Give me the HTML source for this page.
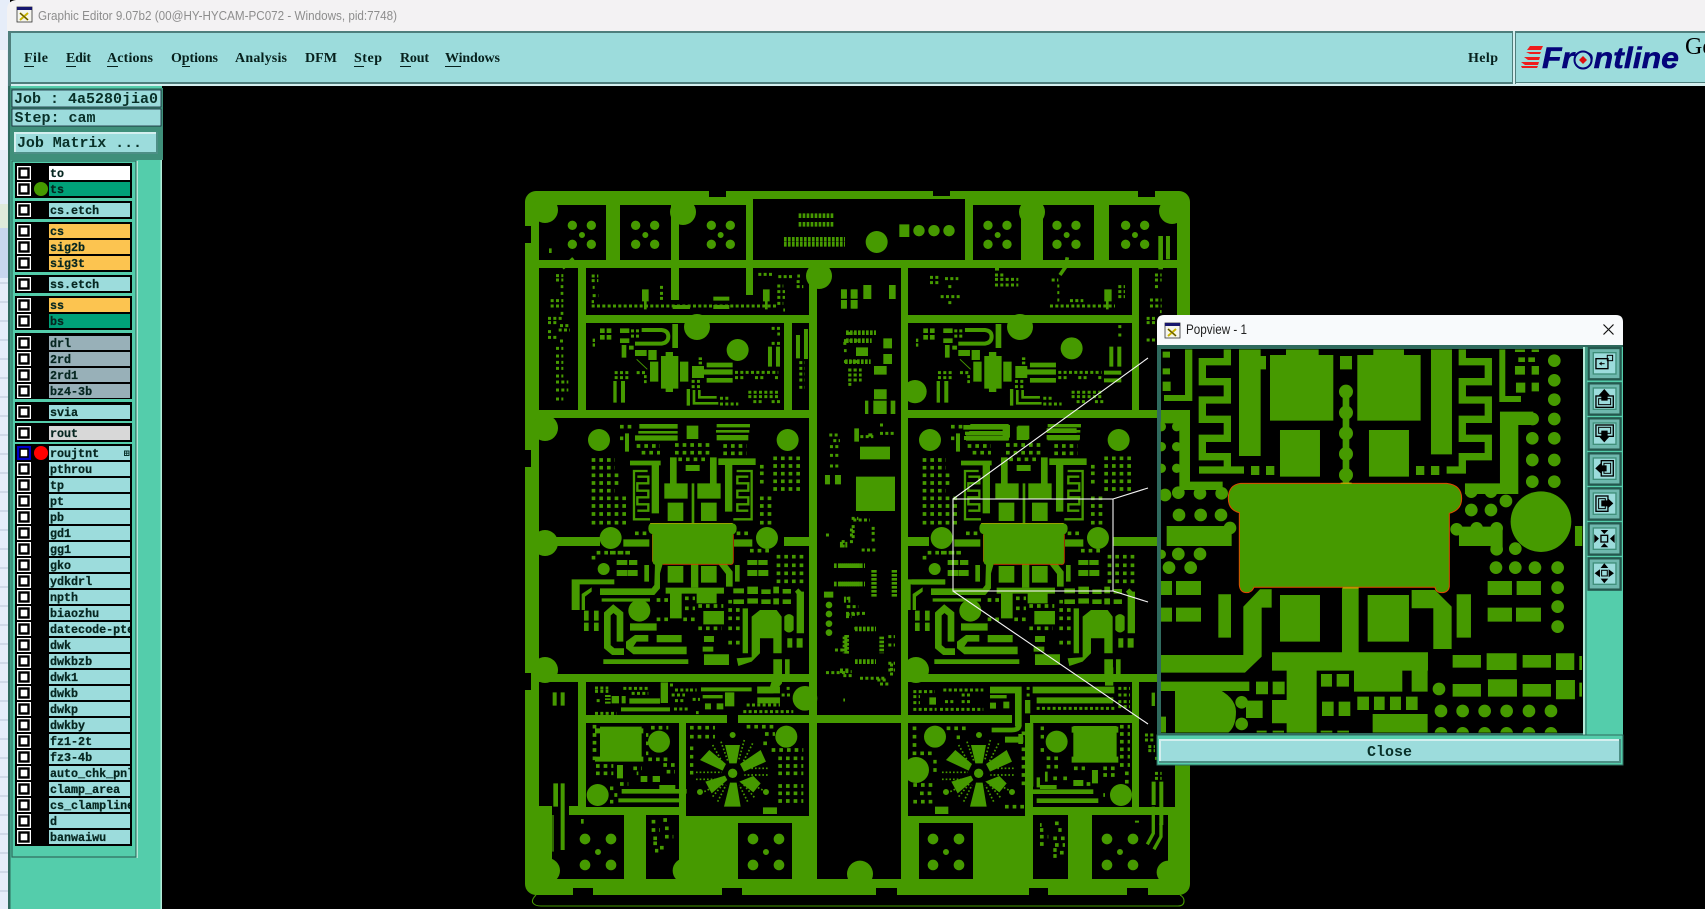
<!DOCTYPE html>
<html><head><meta charset="utf-8"><title>Graphic Editor</title>
<style>
html,body{margin:0;padding:0;background:#000;width:1705px;height:909px;overflow:hidden}
svg{display:block}
.g{fill:#469a00}
.d,.c,.s{fill:none;stroke:#469a00}
.c{stroke-linecap:round}
.d11{stroke-width:11;stroke-dasharray:11 12;fill:none;stroke:#469a00}
.d9{stroke-width:9;stroke-dasharray:9 7;fill:none;stroke:#469a00}
.d14{stroke-width:14;stroke-dasharray:8 4;fill:none;stroke:#469a00}
.m{font-family:"Liberation Serif",serif;font-weight:bold;font-size:14px;fill:#06201c}
.l{font-family:"Liberation Mono",monospace;font-weight:bold;font-size:11.7px;fill:#062620;stroke:#062620;stroke-width:.25}
.j{font-family:"Liberation Mono",monospace;font-weight:bold;font-size:15px;fill:#083028}
.u{stroke:#06201c;stroke-width:1;fill:none}
</style></head><body>
<svg xmlns="http://www.w3.org/2000/svg" width="1705" height="909" viewBox="0 0 1705 909">
<defs>
<clipPath id="lc"><rect x="49" y="160" width="81" height="690"/></clipPath>
<clipPath id="pc"><rect x="32" y="118" width="1266" height="1150"/></clipPath>
<g id="ck"><rect width="14" height="14" fill="#fff"/><rect x="2.5" y="2.5" width="9" height="9" fill="none" stroke="#000" stroke-width="2.4"/></g>
<g id="xi"><rect width="15" height="15" fill="#f5f5ee" stroke="#333" stroke-width=".8"/><rect width="15" height="3" fill="#16166e"/><path d="M3 6l8 7M11 6l-8 7" stroke="#c8b400" stroke-width="2"/><path d="M3 6l8 7" stroke="#222" stroke-width=".8"/></g>

<!-- flower, centred at 0,0 in 3x coords -->
<g id="fl">
<path class="s" stroke-width="5" stroke-dasharray="5 6" d="M-35-95L-15-38M35-100L18-38M60-90L32-35M-60-85L-28-28M105-15H32M105 5H35M-110-3H-32M-110 18H-32M90 50L35 22M-85 55L-32 28M-45 85L-20 35M-60 70L-25 28M45 85L20 35M65 72L28 28"/>
<path class="g" d="M-23-85H22L12-30H-10ZM22-28L84-70L100-35L34-5ZM20 25L62 8L84 30L62 57ZM-8 28H12L24 100H-26ZM-82 25L-23 7L-16 20L-63 60ZM-70-70L-20-28L-30-8L-98-40Z"/>
<path class="c" stroke-width="28" d="M0 0h.01"/>
</g>

<!-- row-2b module, 3x coords -->
<g id="m2">
<path class="g" d="M240 445h14v14h-14zM260 445h14v14h-14zM240 465h14v14h-14zM260 465h14v14h-14zM218 476h7v10h-7zM218 490h7v10h-7zM300 445h28v14h-28zM300 475h28v14h-28zM305 495h14v38h-14zM327 497h14v12h-14zM333 448h9v9h-9zM348 448h9v9h-9zM333 464h9v9h-9zM348 464h9v9h-9zM345 510h35v18h-35zM385 510h25v30h-25zM390 545h25v60h-25zM423 528h52v98h-52zM437 516h22v120h-22zM480 545h25v60h-25zM457 432h17v72h-17zM516 558h36v36h-36zM552 568h86v16h-86zM560 548h78v14h-78zM560 594h78v14h-78zM280 603h10v65h-10zM303 603h12v65h-12zM536 532h10v8h-10zM536 545h10v8h-10zM500 627h10v50h-10z"/>
<path class="s" stroke-width="12" d="M365 450H425Q445 452 445 470T425 491H345"/>
<path class="s" stroke-width="3" d="M350 538L382 568"/>
<path class="s" stroke-width="8" d="M538 630V652H590M522 630V670H595"/>
<path class="d9" d="M284 578H325M284 593H325M645 577H775M645 593H670M705 593H730M765 593H780M515 604H545M515 620H545M600 655H625M600 672H655M685 637H780M685 650H780M700 665H725M755 665H780M350 578H380M372 590H380M372 605H380"/>
</g>

<!-- row-3 module, 3x coords -->
<g id="m3">
<path class="c" stroke-width="66" d="M237 60h.01M803 60h.01M272 354h.01M741 354h.01"/>
<path class="c" stroke-width="36" d="M251 447h.01"/>
<path class="g" d="M358 12h115v14H358zM355 33h118v8H355zM345 46h128v16H345zM315 40h12v55h-12zM590 12h100v10H590zM588 30h100v8H588zM590 45h95v16h-95zM500 17h35v40h-35zM395 125h22v155h-22zM330 122h92v14h-92zM595 115h112v20H595zM615 135h22v140h-22zM433 190h70v46h-70zM450 112h20v80h-20zM532 190h70v46h-70zM570 112h20v80h-20zM497 135h42v18h-42zM443 248h47v55h-47zM543 248h47v55h-47zM515 190h8v120h-8zM310 358h78v22h-78zM642 358h55v22h-55zM443 438h47v50h-47zM543 438h47v50h-47zM513 433h22v70h-22zM373 435h14v50h-14zM645 435h14v50h-14zM290 420h32v15h-32zM327 420h25v15h-25zM290 450h32v18h-32zM323 450h30v18h-30zM682 420h30v15h-30zM715 420h28v15h-28zM682 450h30v18h-30zM715 450h30v18h-30z"/>
<path class="g" d="M405 432H428L420 460V505L403 525H240V505H395L403 495ZM595 432H620L638 455V500H618V462ZM155 478H283V493H179V570H155ZM185 522L215 502V515L195 530V570H185ZM318 665L345 645H385V665H350L340 680H500V703H340L318 685ZM250 718H505V732H250Z"/>
<path class="g" d="M245 535h145v10H245zM330 610h80v22h-80zM410 645h75v22h-75zM437 503h175v18H437zM450 520h35v75h-35zM530 520h60v30h-60zM550 573h62v40h-62zM640 505h32v15h-32zM682 500h32v22h-32zM724 508h28v14h-28zM760 500h17v20h-17zM788 507h25v14h-25zM640 538h32v14h-32zM682 535h32v16h-32zM724 538h28v14h-28zM760 535h17v18h-17zM788 538h25v14h-25zM668 565h16v135h-16zM552 703h75v32h-75zM552 648h30v18h-30zM548 680h32v15h-32zM802 655h15v28h-15zM830 655h18v28h-18zM760 718h26v46h-26zM795 718h14v46h-14zM192 572h14v30h-14zM192 608h14v25h-14zM222 572h14v30h-14zM222 608h14v25h-14z"/>
<path class="g" d="M830 515H852V640H830ZM825 515L835 505L852 522H830Z"/>
<path class="g" d="M695 590L720 570H770L785 590V700H760V655H720V700L695 725L655 738L650 715L695 712Z"/>
<path class="s" stroke-width="7" d="M383 153H342V298H390M352 170H385V190H352V212H385V232H352V253H385V272H352M650 153H695V298H640M685 170H652V190H685V212H652V232H685V253H652V272H685"/>
<path class="s" stroke-width="20" d="M300 665V582L280 566L262 582V680L280 695H312"/>
<path class="c" stroke-width="66" d="M358 572h.01"/>
<path class="g" d="M793 590Q807 575 821 590V630Q807 645 793 630Z"/>
<path class="g" d="M390 310H638Q650 312 650 325T640 343V425Q640 435 630 433H428Q420 435 410 435Q398 435 398 425V343Q385 340 385 325T395 310Z"/>
<path class="s" style="stroke:#c9a800" stroke-width="2" d="M390 310H638M398 343V425"/>
<path class="s" style="stroke:#d03a00" stroke-width="2.5" d="M640 343V425Q640 435 630 433H428"/>
<path class="d11" d="M215 120H285M215 143H285M215 166H300M215 189H300M215 212H285M215 235H325M215 258H325M215 282H325M215 308H325M230 398H330M215 413H230M270 398H330M760 115H850M760 138H850M760 161H850M760 184H850M760 207H850M720 140H740M720 160H740M720 185H740M720 235H760M720 258H760M720 282H760M720 308H760M690 392H750M770 410H850M770 436H850M770 460H850M770 484H850M410 540H450M495 535H525M495 565H525M410 598H455M395 620H410M490 598H525M535 625H605M535 558H610M625 545H660M625 570H660M625 595H660M625 625H660M625 668H660M345 340H380M650 340H690M350 78H420M365 98H420M610 78H680M610 100H680M300 20H340M300 55H310M465 75H580M465 98H580M475 118H565"/>
</g>
</defs>

<!-- desktop sliver -->
<rect width="1705" height="909" fill="#000"/>
<rect x="0" y="0" width="10" height="909" fill="#e6edf9"/>
<path stroke="#b9c5d6" stroke-width="1" d="M0 264H9M0 283H9M0 302H9M0 321H9M0 340H9M0 359H9M0 378H9M0 397H9M0 416H9M0 435H9M0 454H9M0 473H9M0 492H9M0 511H9M0 530H9M0 549H9M0 568H9M0 587H9M0 606H9M0 625H9M0 644H9M0 663H9M0 682H9M0 701H9M0 720H9M0 739H9M0 758H9M0 777H9M0 796H9M0 815H9M0 834H9M0 853H9M0 872H9M0 891H9"/>
<rect x="0" y="204" width="8" height="24" fill="#dfeadb"/><rect x="0" y="228" width="8" height="50" fill="#c8d6ee"/>
<rect x="0" y="50" width="7" height="100" fill="#f2f5fa"/>
<!-- title bar -->
<path d="M7 31V10Q7 1 16 0H1705V31Z" fill="#f3f2f3"/>
<use href="#xi" transform="translate(17,7)"/>
<text x="38" y="20" font-family="'Liberation Sans',sans-serif" font-size="13" fill="#8d8d8d" textLength="359" lengthAdjust="spacingAndGlyphs">Graphic Editor 9.07b2 (00@HY-HYCAM-PC072 - Windows, pid:7748)</text>

<!-- menu -->
<rect x="8" y="31" width="1697" height="55" fill="#4e7e7c"/>
<rect x="11" y="33" width="1501" height="49" fill="#9cdcdc"/>
<rect x="11" y="84" width="1694" height="2" fill="#d4efef"/>
<rect x="1513" y="31" width="2" height="55" fill="#d4efef"/>
<rect x="1516" y="33" width="189" height="49" fill="#9cdcdc"/>
<rect x="1516" y="83" width="189" height="3" fill="#d4efef"/>
<text class="m" x="24" y="62" textLength="24">File</text><path class="u" d="M24 66.5H34"/>
<text class="m" x="66" y="62" textLength="25">Edit</text><path class="u" d="M66 66.5H76"/>
<text class="m" x="107" y="62" textLength="46">Actions</text><path class="u" d="M107 66.5H118"/>
<text class="m" x="171" y="62" textLength="47">Options</text><path class="u" d="M182 66.5H190"/>
<text class="m" x="235" y="62" textLength="52">Analysis</text>
<text class="m" x="305" y="62" textLength="32">DFM</text>
<text class="m" x="354" y="62" textLength="28">Step</text><path class="u" d="M354 66.5H364"/>
<text class="m" x="400" y="62" textLength="29">Rout</text><path class="u" d="M400 66.5H411"/>
<text class="m" x="445" y="62" textLength="55">Windows</text><path class="u" d="M445 66.5H461"/>
<text class="m" x="1468" y="62" textLength="30">Help</text>
<!-- logo -->
<path fill="#ee1c1c" d="M1530 46H1543L1541 50H1527ZM1526 52H1541L1540 54H1530ZM1524 57H1540L1539 60H1528ZM1521 62H1539L1538 65H1525ZM1521 66H1538L1537 68H1522Z"/>
<text x="1542" y="68" font-family="'Liberation Sans',sans-serif" font-weight="bold" font-style="italic" font-size="30" fill="#04047a" stroke="#04047a" stroke-width=".5" textLength="137" lengthAdjust="spacingAndGlyphs">Frontline</text>
<circle cx="1583" cy="60" r="8.5" fill="#9cdcdc" stroke="#04047a" stroke-width="2"/>
<path d="M1583 56l4 4-4 4-4-4z" fill="#e01010"/>
<text x="1685" y="54" font-family="'Liberation Serif',serif" font-size="24" fill="#000">Ge</text>

<!-- left panel -->
<rect x="8" y="86" width="154" height="823" fill="#54cdab"/>
<rect x="8" y="86" width="2.5" height="823" fill="#2f6a5e"/>
<rect x="160.5" y="160" width="1.5" height="749" fill="#b4ead8"/>
<rect x="10" y="88" width="153" height="72" fill="#3f8f7a"/>
<rect x="12" y="90" width="149" height="17" fill="#9cdcdc" stroke="#123" stroke-width=".8"/>
<rect x="12" y="109" width="149" height="17" fill="#9cdcdc" stroke="#123" stroke-width=".8"/>
<rect x="12" y="129" width="149" height="28" fill="#3f8f7a"/>
<rect x="14" y="132" width="144" height="22" fill="#4e8f86"/>
<rect x="14" y="132" width="142" height="20" fill="#d4efef"/>
<rect x="16" y="134" width="140" height="18" fill="#9cdcdc"/>
<text class="j" x="14" y="103" textLength="144">Job : 4a5280jia0</text>
<text class="j" x="14.5" y="122">Step: cam</text>
<text class="j" x="17" y="147" textLength="125">Job Matrix ...</text>

<!-- layer list frame -->
<rect x="12" y="161" width="124" height="696" fill="#54cdab" stroke="#2f6a5e" stroke-width="1.2"/>
<rect x="136.5" y="161" width="1.5" height="697" fill="#b4ead8"/>
<g fill="#000">
<rect x="15" y="163" width="117" height="35"/><rect x="15" y="201" width="117" height="18"/><rect x="15" y="222" width="117" height="50"/><rect x="15" y="275" width="117" height="18"/><rect x="15" y="296" width="117" height="34"/><rect x="15" y="333" width="117" height="66"/><rect x="15" y="402" width="117" height="19"/><rect x="15" y="423" width="117" height="19"/><rect x="15" y="444" width="117" height="402"/>
</g>
<g>
<rect x="49" y="166" width="81" height="14" fill="#fff"/>
<rect x="49" y="182" width="81" height="14" fill="#00a078"/>
<rect x="49" y="203" width="81" height="14" fill="#9cdcdc"/>
<rect x="49" y="224" width="81" height="14" fill="#fcc450"/>
<rect x="49" y="240" width="81" height="14" fill="#fcc450"/>
<rect x="49" y="256" width="81" height="14" fill="#fcc450"/>
<rect x="49" y="277" width="81" height="14" fill="#9cdcdc"/>
<rect x="49" y="298" width="81" height="14" fill="#fcc450"/>
<rect x="49" y="314" width="81" height="14" fill="#00a078"/>
<rect x="49" y="336" width="81" height="14" fill="#98b0b8"/>
<rect x="49" y="352" width="81" height="14" fill="#98b0b8"/>
<rect x="49" y="368" width="81" height="14" fill="#98b0b8"/>
<rect x="49" y="384" width="81" height="14" fill="#98b0b8"/>
<rect x="49" y="405" width="81" height="14" fill="#9cdcdc"/>
<rect x="49" y="426" width="81" height="14" fill="#d8d8d8"/>
<rect x="49" y="446" width="81" height="398" fill="#9cdcdc"/>
<path stroke="#000" stroke-width="2" d="M49 461H130M49 477H130M49 493H130M49 509H130M49 525H130M49 541H130M49 557H130M49 573H130M49 589H130M49 605H130M49 621H130M49 637H130M49 653H130M49 669H130M49 685H130M49 701H130M49 717H130M49 733H130M49 749H130M49 765H130M49 781H130M49 797H130M49 813H130M49 829H130"/>
</g>
<g>
<use href="#ck" x="17" y="166"/><use href="#ck" x="17" y="182"/><use href="#ck" x="17" y="203"/><use href="#ck" x="17" y="224"/><use href="#ck" x="17" y="240"/><use href="#ck" x="17" y="256"/><use href="#ck" x="17" y="277"/><use href="#ck" x="17" y="298"/><use href="#ck" x="17" y="314"/><use href="#ck" x="17" y="336"/><use href="#ck" x="17" y="352"/><use href="#ck" x="17" y="368"/><use href="#ck" x="17" y="384"/><use href="#ck" x="17" y="405"/><use href="#ck" x="17" y="426"/>
<rect x="17" y="446" width="14" height="14" fill="#0000c8"/><rect x="20" y="449" width="8" height="8" fill="#fff" stroke="#000" stroke-width="1.6"/>
<use href="#ck" x="17" y="462"/><use href="#ck" x="17" y="478"/><use href="#ck" x="17" y="494"/><use href="#ck" x="17" y="510"/><use href="#ck" x="17" y="526"/><use href="#ck" x="17" y="542"/><use href="#ck" x="17" y="558"/><use href="#ck" x="17" y="574"/><use href="#ck" x="17" y="590"/><use href="#ck" x="17" y="606"/><use href="#ck" x="17" y="622"/><use href="#ck" x="17" y="638"/><use href="#ck" x="17" y="654"/><use href="#ck" x="17" y="670"/><use href="#ck" x="17" y="686"/><use href="#ck" x="17" y="702"/><use href="#ck" x="17" y="718"/><use href="#ck" x="17" y="734"/><use href="#ck" x="17" y="750"/><use href="#ck" x="17" y="766"/><use href="#ck" x="17" y="782"/><use href="#ck" x="17" y="798"/><use href="#ck" x="17" y="814"/><use href="#ck" x="17" y="830"/>
</g>
<circle cx="41" cy="189" r="7" fill="#469a00"/><circle cx="41" cy="453" r="7" fill="#ff0000"/>
<g clip-path="url(#lc)">
<text class="l" x="50" y="177">to</text><text class="l" x="50" y="193">ts</text><text class="l" x="50" y="214">cs.etch</text><text class="l" x="50" y="235">cs</text><text class="l" x="50" y="251">sig2b</text><text class="l" x="50" y="267">sig3t</text><text class="l" x="50" y="288">ss.etch</text><text class="l" x="50" y="309">ss</text><text class="l" x="50" y="325">bs</text><text class="l" x="50" y="347">drl</text><text class="l" x="50" y="363">2rd</text><text class="l" x="50" y="379">2rd1</text><text class="l" x="50" y="395">bz4-3b</text><text class="l" x="50" y="416">svia</text><text class="l" x="50" y="437">rout</text>
<text class="l" x="50" y="457">roujtnt</text><text class="l" x="50" y="473">pthrou</text><text class="l" x="50" y="489">tp</text><text class="l" x="50" y="505">pt</text><text class="l" x="50" y="521">pb</text><text class="l" x="50" y="537">gd1</text><text class="l" x="50" y="553">gg1</text><text class="l" x="50" y="569">gko</text><text class="l" x="50" y="585">ydkdrl</text><text class="l" x="50" y="601">npth</text><text class="l" x="50" y="617">biaozhu</text><text class="l" x="50" y="633">datecode-pte</text><text class="l" x="50" y="649">dwk</text><text class="l" x="50" y="665">dwkbzb</text><text class="l" x="50" y="681">dwk1</text><text class="l" x="50" y="697">dwkb</text><text class="l" x="50" y="713">dwkp</text><text class="l" x="50" y="729">dwkby</text><text class="l" x="50" y="745">fz1-2t</text><text class="l" x="50" y="761">fz3-4b</text><text class="l" x="50" y="777">auto_chk_pnl</text><text class="l" x="50" y="793">clamp_area</text><text class="l" x="50" y="809">cs_clampline</text><text class="l" x="50" y="825">d</text><text class="l" x="50" y="841">banwaiwu</text>
</g>
<rect x="124.5" y="451" width="4.5" height="4.5" fill="none" stroke="#083028" stroke-width="1"/><path d="M126.7 451v4.5M124.5 453.2h4.5" stroke="#083028" stroke-width=".8"/>

<!-- BOARD -->
<rect x="525" y="191" width="665" height="704" rx="11" fill="#469a00"/>
<path fill="#000" d="M539 205h67v55h-67zM620 205h51v55h-51zM679 205h67v55h-67zM753 199h212v61H753zM973 205h48v55h-48zM1043 205h51v55h-51zM1109 205h68v55h-68zM539 268h39v142h-39zM586 268h223v47H586zM586 323h198v87H586zM792 323h17v87h-17zM817 268h84v447h-84zM817 723h84v156h-84zM908 268h224v47H908zM908 323h224v87H908zM1139 268h38v142h-38zM539 418h270v256H539zM908 418h269v256H908zM539 682h39v124h-39zM586 682h223v33H586zM727 715h11v8h-11zM586 723h93v84h-93zM686 723h123v93H686zM908 682h224v33H908zM1012 715h18v8h-18zM908 723h117v93H908zM1033 723h99v84h-99zM1139 682h36v125h-36zM552 806h17v9h-17zM552 815h72v64h-72zM646 815h33v64h-33zM738 823h54v56h-54zM919 823h54v56h-54zM1033 815h35v64h-35zM1092 815h76v64h-76zM573 888h20v7h-20zM722 888h20v7h-20zM876 888h21v7h-21zM1029 888h19v7h-19zM1127 888h21v7h-21zM525 226h6v17h-6zM525 450h6v17h-6zM525 673h6v17h-6zM709 191h17v6h-17zM933 191h17v5h-17zM1138 191h17v6h-17z"/>
<path fill="none" stroke="#469a00" stroke-width="1.1" d="M536 895Q531 900 533 903Q535 906 541 906H1178Q1184 906 1184 901Q1184 897 1180 895"/>

<!-- stubs / big features in absolute coords -->
<path class="g" d="M671 268h8v32h-8zM746 268h7v27h-7zM539 537h61v9h-61zM784 537h25v9h-25zM908 537h21v9h-21zM1113 537h44v9h-44z"/>
<path class="c" stroke-width="26" d="M545 210h.01M545 428h.01M545 543h.01M545 670h.01M819 276h.01M697 327h.01M683 212h.01M1020 327h.01M1032 212h.01"/>
<path class="c" stroke-width="26" d="M1172 211h.01"/>
<use href="#m2" transform="translate(520,180) scale(.3333)"/>
<use href="#m2" transform="translate(843.3,180) scale(.3333)"/>
<use href="#m3" transform="translate(520,420) scale(.3333)"/>
<use href="#m3" transform="translate(851,420) scale(.3333)"/>

<!-- zoom 6 top-left -->
<g transform="translate(520,180) scale(.3333)">
<path class="c" stroke-width="28" d="M157 136h.01M214 136h.01M157 193h.01M214 193h.01M347 136h.01M404 136h.01M347 193h.01M404 193h.01M574 136h.01M631 136h.01M574 193h.01M631 193h.01"/>
<path class="c" stroke-width="18" d="M186 165h.01M376 165h.01M602 165h.01"/>
<path class="c" stroke-width="66" d="M653 510h.01"/>
<path class="g" d="M87 205h8v14h-8zM366 328h20v36h-20zM372 364h8v24h-8zM729 328h20v36h-20zM735 364h8v24h-8zM458 375h52v12h-52zM580 350h48v12h-48zM580 375h48v12h-48zM744 500h12v60h-12zM768 500h12v60h-12zM828 465h12v70h-12zM852 447h12v90h-12zM963 328h18v28h-18zM995 328h18v28h-18zM963 360h18v26h-18zM995 360h18v26h-18z"/>
<path class="s" stroke-width="10" d="M128 265L160 235"/>
<path class="d14" d="M836 107H940M836 133H940M792 178H975M792 193H975"/>
<path class="d9" d="M108 287H130M108 300H130M122 320H130M122 340H130M92 362H130M92 378H130M122 400H130M84 415H130M84 428H110M120 437H150M84 455H100M116 450H150M84 472H115M120 483H130M108 505H130M108 528H130M108 547H130M108 565H130M108 588H130M108 606H145M108 630H145M108 657H130M215 288H235M215 302H235M218 322H224M218 347H235M215 365H222M215 378H770M420 322H435M420 340H435M420 355H435M715 283H760M775 290H820M832 288H840M830 305H845M830 320H850M772 318H790M772 335H795M772 352H795M772 370H790M790 390H795M772 410H782M755 445H780M772 462H780M755 490H780M838 548H855M838 565H855M838 582H855M838 600H855M838 622H855M985 460H1020M972 482H1020M972 512H980M972 545H1020M985 570H1020M985 585H1020M985 600H1020"/>
</g>
<!-- zoom 10 top-right -->
<g transform="translate(840,180) scale(.3333)">
<path class="c" stroke-width="28" d="M444 136h.01M501 136h.01M444 193h.01M501 193h.01M651 136h.01M708 136h.01M651 193h.01M708 193h.01M857 136h.01M914 136h.01M857 193h.01M914 193h.01"/>
<path class="c" stroke-width="18" d="M473 165h.01M680 165h.01M885 165h.01"/>
<path class="c" stroke-width="66" d="M110 186h.01M695 505h.01"/>
<path class="c" stroke-width="34" d="M237 152h.01M282 152h.01M327 152h.01"/>
<path class="c" stroke-width="70" d="M225 635h.01"/>
<path class="g" d="M178 133h30v38h-30zM3 328h16v28H3zM32 328h18v28H32zM70 315h24v42H70zM147 315h20v42h-20zM3 360h16v26H3zM32 360h18v26H32zM465 240h12v32h-12zM955 168h14v100h-14zM978 168h12v70h-12zM130 475h26v30h-26zM130 522h26v30h-26zM102 558h38v26h-38zM102 628h38v30h-38zM48 502h36v26H48zM808 500h12v60h-12zM832 500h12v60h-12zM792 572h52v12h-52zM792 595h52v12h-52zM793 328h22v36h-22zM798 364h8v24h-8zM100 662h40v40h-40zM75 662h10v40H75zM152 662h14v40h-14zM488 745h22v28h-22zM530 740h35v40h-35zM370 735h140v14H370zM375 755h135v10H375zM372 768h135v12H372zM620 745h90v14h-90zM620 765h100v14H620z"/>
<path class="s" stroke-width="11" d="M682 232L676 262L660 285"/>
<path class="d14" d="M18 458H108M18 482H95M15 545H92"/>
<path class="d9" d="M465 285H495M465 298H535M465 315H535M635 300H655M652 318H658M652 338H658M652 360H658M630 378H825M690 362H730M835 320H855M835 335H855M835 350H855M945 285H965M945 300H965M945 320H960M930 360H965M930 378H965M960 395H965M270 292H300M270 308H300M315 296H355M325 320H335M302 350H360M325 368H335M920 415H945M920 428H945M920 480H945M830 410H860M835 440H845M835 465H845M25 570H65M25 585H65M25 600H65M25 613H35M72 515H80M10 490H20"/>
</g>

<!-- center column zoom 7 / 11 -->
<g transform="translate(520,420) scale(.3333)">
<path class="c" stroke-width="20" d="M927 555h.01M927 582h.01M927 611h.01M927 638h.01"/>
<path class="g" d="M915 165h15v28h-15zM945 165h18v28h-18zM912 515h28v18h-28zM972 530h6v18h-6zM985 530h6v18h-6zM1008 172h12v100h-12zM1003 25h14v40h-14z"/>
<path class="d14" d="M942 437H1020M942 492H1020M980 645V705"/>
<path class="d9" d="M928 45H960M940 62H960M930 80H960M930 106H960M930 138H955M995 295H1015M990 330H1005M990 345H1005M990 365H1005M918 345H928M960 370H982M960 378H982M918 758H980M945 690H970M982 560H1015M980 583H1015M1003 625H1015"/>
</g>
<g transform="translate(840,420) scale(.3333)">
<path class="g" d="M48 170h117v103H48zM60 80h90v38H60zM85 40h12v10H85zM215 478h100v16H215z"/>
<path class="d14" d="M0 437H75M0 492H75M15 650V700M125 650V700M45 627H108M45 725H108"/>
<path class="d14" style="stroke-width:16" d="M102 450V530M163 450V530"/>
<path class="d9" d="M45 30H60M45 50H100M120 15H135M120 40H165M40 300H90M35 320H45M35 335H45M35 350H45M95 325H110M95 340H110M95 360H110M5 365H20M5 378H20M65 390H110M20 535H30M20 560H35M18 580H82M18 590H35M145 650H165M145 675H165M0 750H30M145 730H165M145 750H165M60 775H140"/>
</g>

<!-- bottom-left rows -->
<g transform="translate(520,660) scale(.3333)">
<use href="#fl" x="638" y="340"/>
<path class="c" stroke-width="66" d="M417 245h.01M799 230h.01M233 405h.01"/>
<path class="c" stroke-width="74" d="M855 115h.01"/>
<path class="c" stroke-width="32" d="M195 537h.01M273 537h.01M195 615h.01M273 615h.01M699 537h.01M777 537h.01M699 615h.01M777 615h.01"/>
<path class="c" stroke-width="18" d="M234 576h.01M738 576h.01M540 396h.01M738 396h.01M638 225h.01"/>
<path class="c" stroke-width="76" d="M82 632h.01M496 632h.01M1020 640h.01"/>
<path class="g" d="M98 97h12v40H98zM122 97h12v40h-12zM100 370h14v70h-14zM122 370h12v200h-12zM97 465h4v110h-4zM240 200h125v105H240zM225 205h145v15H225zM225 290h145v15H225zM291 315h18v40h-18zM305 387h195v14H305zM418 375h48v12h-48zM295 415h190v12H295zM422 67h22v62h-22zM303 142h147v12H303zM328 115h92v16h-92zM275 108h22v22h-22zM543 82h152v12H543zM548 105h60v10h-60zM615 97h28v42h-28zM762 0h24v65h-24zM712 80h68v20h-68zM712 112h68v18h-68zM729 442h42v20h-42zM555 130h18v18h-18zM590 130h20v18h-20zM362 348h20v18h-20zM398 348h22v18h-22zM255 105h17v6h-17zM255 115h17v5h-17zM255 125h17v6h-17zM305 108h12v22h-12z"/>
<path class="g" d="M762 40H786V70L760 100H712V80H750Z"/>
<path class="d9" d="M225 84H265M225 94H265M310 85H385M335 100H385M230 122H245M510 90H530M465 90H505M455 105H495M465 122H495M518 118H540M462 147H510M528 158H536M670 155H820M680 135H780M785 105H810M450 75H460M225 160H290M800 85H810"/>
<path class="d11" d="M218 200H230M218 225H230M218 248H230M218 270H230M218 295H230M378 225H385M378 250H385M378 280H385M393 203H445M385 298H445M430 315H465M440 335H465M228 318H280M228 340H280M340 325H365M350 340H355M300 372H325M510 203H585M510 230H585M510 265H520M510 290H520M510 315H520M510 338H520M680 200H765M735 222H765M730 250H745M755 270H850M775 295H850M775 318H850M775 340H850M775 378H850M775 400H850M775 423H850M395 485H410M430 480H450M395 510H420M435 505H450M400 535H415M435 530H460M400 550H415M405 572H415M420 563H440M270 385H280M283 405H292M270 425H280"/>
<path class="g" d="M183 477h8v14h-8z"/>
</g>
<!-- bottom-right rows -->
<g transform="translate(840,660) scale(.3333)">
<use href="#fl" x="416" y="340"/>
<path class="c" stroke-width="66" d="M285 230h.01M650 245h.01M843 405h.01"/>
<path class="c" stroke-width="78" d="M228 330h.01"/>
<path class="c" stroke-width="78" d="M228 30h.01M60 642h.01"/>
<path class="c" stroke-width="70" d="M985 637h.01"/>
<path class="c" stroke-width="32" d="M279 537h.01M357 537h.01M279 615h.01M357 615h.01M801 537h.01M879 537h.01M801 615h.01M879 615h.01"/>
<path class="c" stroke-width="18" d="M318 576h.01M840 576h.01M318 396h.01M516 396h.01M417 225h.01"/>
<path class="g" d="M700 198h130v110H700zM695 200h140v18H695zM695 290h140v18H695zM555 190h25v190h-25zM555 388h205v14H555zM590 415h185v14H590zM600 375h50v12h-50zM590 352h10v30h-10zM450 80h95v20h-95zM450 105h50v10h-50zM525 85h20v115h-20zM285 440h40v22h-40zM495 230h55v18h-55zM535 222h14v30h-14zM555 120h16v40h-16zM578 80h245v20H578zM590 112h230v18H590zM795 22h25v55h-25zM756 330h18v40h-18zM615 335h8v30h-8zM700 360h30v18h-30zM450 128h18v18h-18zM490 125h18v20h-18zM268 112h20v22h-20zM935 98h10v40h-10zM965 170h12v30h-12zM935 365h12v70h-12zM958 365h12v130h-12zM885 482h12v6h-12z"/>
<path class="s" stroke-width="14" d="M538 195Q538 210 515 210H455"/>
<path class="s" stroke-width="10" d="M940 440V520L922 553M963 490V530L942 568"/>
<path class="d9" d="M0 35H35M10 47H35M112 60H140M120 72H150M150 15H165M150 28H165M150 42H165M10 120H15M220 95H285M220 110H240M220 128H240M220 148H290M310 90H430M365 105H395M315 125H340M365 125H395M300 148H430M590 145H825M560 85H575M560 105H575M835 85H870M835 105H870M835 125H870M835 140H870M915 225H945M915 240H945M925 260H945M925 272H945M945 340H965M945 355H965M945 295H950"/>
<path class="d11" d="M218 205H235M218 230H230M218 255H230M218 280H285M218 300H228M320 205H385M350 232H360M545 220H555M545 268H555M545 295H555M545 320H555M545 345H555M545 370H555M220 375H285M240 400H280M220 425H280M280 305H290M280 330H290M495 440H555M602 205H612M602 230H612M602 270H612M620 295H660M620 320H660M640 355H660M670 355H690M702 325H735M740 372H755M790 325H830M790 345H830M840 200H870M840 222H870M840 245H870M840 268H870M840 290H870M840 315H870M855 340H870M855 365H870M790 405H795M645 490H665M655 510H665M640 535H675M645 555H675M640 570H650M660 578H675M640 588H650M600 495H605M600 510H610M600 530H625M600 552H618"/>
</g>

<!-- selection rectangle & rays -->
<g fill="none" stroke="#f4f4f4" stroke-width="1.1">
<rect x="953" y="499" width="160" height="92"/>
<path d="M953 499L1148 358M1113 499L1148 488M1113 591L1148 602M953 591L1148 724"/>
</g>

<!-- POPUP -->
<path d="M1157 322Q1157 315 1164 315H1616Q1623 315 1623 322V345H1157Z" fill="#f8fafc"/>
<rect x="1157" y="345" width="466" height="420" fill="#54cdab"/>
<rect x="1157" y="345" width="466" height="2" fill="#2f6a5e"/>
<rect x="1157" y="345" width="3" height="420" fill="#2f6a5e"/>
<rect x="1160" y="347" width="424" height="388" fill="#2f6a5e"/>
<rect x="1583" y="347" width="2" height="390" fill="#b4ead8"/>
<rect x="1585" y="347" width="2" height="390" fill="#2f6a5e" opacity=".5"/>
<rect x="1161" y="349" width="422" height="384" fill="#000"/>
<use href="#xi" transform="translate(1165,323)"/>
<text x="1186" y="334" font-family="'Liberation Sans',sans-serif" font-size="13.5" fill="#222" textLength="61" lengthAdjust="spacingAndGlyphs">Popview - 1</text>
<path d="M1603.5 324.5l10 10M1613.5 324.5l-10 10" stroke="#111" stroke-width="1.2" fill="none"/>

<g transform="translate(1150,310) scale(.3333)"><g clip-path="url(#pc)">
<path class="g" d="M38 125h22v18H38zM38 175h22v18H38zM38 215h24v28H38zM105 118h22v155h-22zM42 255h85v18H42zM267 118h65v320h-65zM843 118h63v315h-63zM312 138h36v40h-36zM362 138h36v40h-36zM570 138h36v40h-36zM622 138h36v40h-36zM360 135h190v197H360zM408 118h98v18h-98zM622 135h190v197H622zM670 118h92v18h-92zM578 245h20v280h-20zM390 360h120v140H390zM657 360h120v140H657zM303 468h25v27h-25zM348 468h25v27h-25zM798 468h25v27h-25zM843 468h25v27h-25zM1095 118h30v8h-30zM1145 118h22v8h-22zM1105 142h20v14h-20zM1135 142h20v14h-20zM1095 168h30v26h-30zM1145 168h22v26h-22zM1098 218h28v30h-28zM1145 218h22v26h-22zM1048 118h18v155h-18zM1048 258h65v18h-65z"/>
<path class="s" stroke-width="22" stroke-linejoin="miter" d="M232 118V155H157V215H232V270H157V328H232V385H157V440H232V480H147H282"/>
<path class="s" stroke-width="22" d="M937 118V155H1015V215H937V270H1015V328H937V385H1015V440H937V480H890"/>
<path class="g" d="M33 300H120V515H218V540H88V340H33ZM1050 305H1150V345H1105V552H945V520H1050ZM50 648H245V708H50ZM927 650H1058V708H927ZM1022 690H1058V725H1022Z"/>
<path class="c" stroke-width="42" d="M588 245h.01M588 308h.01M588 370h.01M588 432h.01M588 495h.01"/>
<path class="c" stroke-width="38" d="M1147 385h.01M1147 450h.01M1147 515h.01M1213 152h.01M1213 211h.01M1213 269h.01M1213 327h.01M1213 385h.01M1213 450h.01M1213 515h.01M1148 327h.01M964 545h.01M1023 545h.01M964 600h.01M1023 600h.01M1068 573h.01M1040 718h.01M87 615h.01M152 615h.01M213 615h.01M240 654h.01M85 732h.01M150 732h.01M57 773h.01M122 773h.01M85 548h.01M150 550h.01M215 550h.01M45 555h.01M920 658h.01M980 655h.01M1040 655h.01M1096 716h.01M1038 773h.01M1096 773h.01M1155 773h.01M1223 773h.01M1223 833h.01M1223 890h.01M1223 950h.01M867 1137h.01M873 1203h.01M938 1203h.01M1004 1203h.01M1070 1203h.01M1137 1203h.01M1203 1203h.01M873 1270h.01M938 1270h.01M1004 1270h.01M1070 1270h.01M1137 1270h.01M1203 1270h.01M275 1177h.01M275 1242h.01"/>
<path class="c" stroke-width="28" d="M80 350h.01M80 410h.01M80 475h.01M34 350h.01M34 410h.01M34 475h.01M34 733h.01"/>
<path class="c" stroke-width="182" d="M1173 635h.01"/>
<path class="g" d="M1275 648h22v60h-22zM1013 813h73v42h-73zM1100 813h73v42h-73zM1013 893h73v42h-73zM1098 893h75v42h-75zM33 813h33v42H33zM78 813h75v42H78zM33 893h33v42H33zM78 893h75v42H78zM205 853h38v130h-38zM920 853h43v130h-43zM390 855h120v140H390zM653 855h124v140H653zM576 835h50v195h-50zM366 1027h468v55H366zM410 1082h90v188h-90zM366 1170h45v70h-45zM612 1082h145v63H612zM785 1082h48v63h-48zM513 1092h33v38h-33zM560 1092h37v38h-37zM516 1175h35v43h-35zM566 1175h35v43h-35zM622 1160h35v40h-35zM672 1160h32v40h-32zM720 1160h33v40h-33zM768 1160h35v40h-35zM668 1212h165v56H668zM908 1035h85v38h-85zM1010 1030h90v50h-90zM1118 1035h85v38h-85zM1218 1030h55v50h-55zM1288 1038h8v42h-8zM908 1122h85v38h-85zM1014 1108h87v52h-87zM1118 1122h85v38h-85zM1218 1110h57v58h-57zM1288 1118h8v42h-8zM33 1115h265v28H33zM318 1115h36v38h-36zM368 1115h36v38h-36zM288 1172h50v52h-50zM33 1220h15v48H33zM320 1262h30v6h-30zM368 1262h34v6h-34zM512 1262h35v6h-35zM562 1262h35v6h-35z"/>
<path class="g" d="M330 838H365V893H335V1040L285 1088H33V1035H280V890ZM785 840H855L905 890V1017H850V895H785ZM75 1268V1130H190Q258 1160 258 1205Q258 1250 235 1268Z"/>
<path class="g" d="M272 520H890Q935 525 935 565Q935 600 898 610V830Q895 848 875 848Q858 848 855 832H312Q305 848 290 848Q270 848 268 825V608Q235 600 235 565Q235 525 272 520Z" stroke="#e04a00" stroke-width="3"/>
<path class="s" style="stroke:#bfa000" stroke-width="4" d="M572 520H605M578 834H626"/>
</g></g>

<!-- popup side buttons -->
<g transform="translate(1150,310) scale(.3333)">
<g fill="#6fb8ae" stroke="#24584e" stroke-width="7">
<rect x="1316" y="114" width="96" height="94"/><rect x="1316" y="220" width="96" height="94"/><rect x="1316" y="325" width="96" height="94"/><rect x="1316" y="430" width="96" height="94"/><rect x="1316" y="535" width="96" height="94"/><rect x="1316" y="640" width="96" height="94"/><rect x="1316" y="745" width="96" height="94"/>
</g>
<g fill="#9cdcdc" stroke="#3f8f7a" stroke-width="4">
<rect x="1330" y="128" width="68" height="64"/><rect x="1330" y="234" width="68" height="64"/><rect x="1330" y="339" width="68" height="64"/><rect x="1330" y="444" width="68" height="64"/><rect x="1330" y="549" width="68" height="64"/><rect x="1330" y="654" width="68" height="64"/><rect x="1330" y="759" width="68" height="64"/>
</g>
<g fill="none" stroke="#000" stroke-width="4">
<rect x="1338" y="146" width="36" height="30"/><rect x="1372" y="136" width="16" height="16" stroke-width="3"/><path d="M1364 161H1348" stroke-width="3"/>
<rect x="1338" y="258" width="52" height="34"/><rect x="1346" y="266" width="36" height="18" stroke-width="3"/>
<rect x="1338" y="345" width="52" height="34"/><rect x="1346" y="352" width="36" height="18" stroke-width="3"/>
<rect x="1354" y="452" width="36" height="46"/><rect x="1362" y="460" width="20" height="30" stroke-width="3"/>
<rect x="1338" y="558" width="36" height="46"/><rect x="1346" y="566" width="20" height="30" stroke-width="3"/>
<rect x="1353" y="676" width="20" height="20"/><rect x="1355" y="781" width="17" height="17" stroke-width="3"/>
</g>
<path d="M1363 237L1380 256H1373V272H1354V256H1346ZM1363 397L1346 378H1354V362H1373V378H1380ZM1336 475L1353 459V466H1370V484H1353V491ZM1390 580L1373 564V571H1354V589H1373V596ZM1352 660H1375L1363 672ZM1352 712H1375L1363 700ZM1333 673V699L1347 686ZM1394 673V699L1380 686ZM1363 760L1352 774H1375ZM1363 820L1352 806H1375ZM1334 790L1350 778V802ZM1392 790L1376 778V802Z" fill="#000"/>
<path d="M1348 161l7-6v12z" fill="#000"/>
</g>

<!-- popup close -->
<rect x="1157" y="735" width="466" height="30" fill="#54cdab" stroke="#2f6a5e" stroke-width="1"/>
<rect x="1159" y="739" width="462" height="24" fill="#4e8f86"/>
<rect x="1159" y="739" width="460" height="22" fill="#d4efef"/>
<rect x="1161" y="741" width="458" height="20" fill="#9cdcdc"/>
<text class="j" x="1367" y="756">Close</text>
</svg>
</body></html>
